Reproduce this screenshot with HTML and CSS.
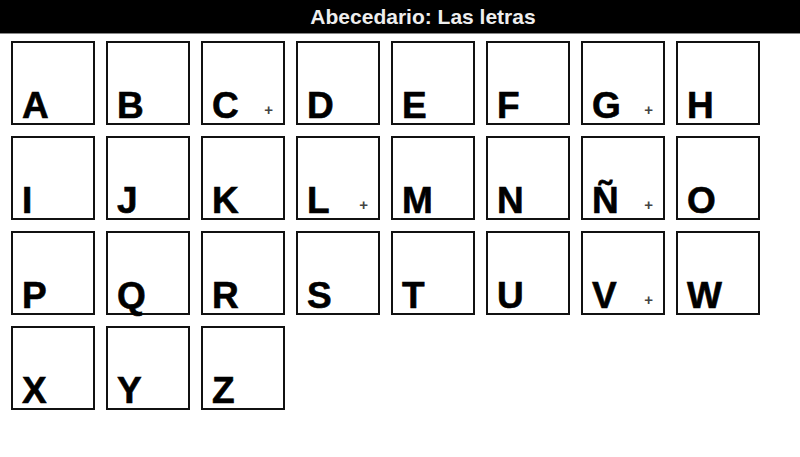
FILE: index.html
```html
<!DOCTYPE html>
<html lang="es">
<head>
    <meta charset="UTF-8">
    <meta name="viewport" content="width=device-width, initial-scale=1.0">
    <title>Abecedario: Las letras</title>
    <link rel="stylesheet" href="styles.css">
</head>
<body>

<div class="header">Abecedario: Las letras</div>

<div class="letters">
    <div class="tile"><span class="letter">A</span></div>
    <div class="tile"><span class="letter">B</span></div>
    <div class="tile"><span class="letter">C</span><span class="more">+</span></div>
    <div class="tile"><span class="letter">D</span></div>
    <div class="tile"><span class="letter">E</span></div>
    <div class="tile"><span class="letter">F</span></div>
    <div class="tile"><span class="letter">G</span><span class="more">+</span></div>
    <div class="tile"><span class="letter">H</span></div>
    <div class="tile"><span class="letter">I</span></div>
    <div class="tile"><span class="letter">J</span></div>
    <div class="tile"><span class="letter">K</span></div>
    <div class="tile"><span class="letter">L</span><span class="more">+</span></div>
    <div class="tile"><span class="letter">M</span></div>
    <div class="tile"><span class="letter">N</span></div>
    <div class="tile"><span class="letter">Ñ</span><span class="more">+</span></div>
    <div class="tile"><span class="letter">O</span></div>
    <div class="tile"><span class="letter">P</span></div>
    <div class="tile"><span class="letter">Q</span></div>
    <div class="tile"><span class="letter">R</span></div>
    <div class="tile"><span class="letter">S</span></div>
    <div class="tile"><span class="letter">T</span></div>
    <div class="tile"><span class="letter">U</span></div>
    <div class="tile"><span class="letter">V</span><span class="more">+</span></div>
    <div class="tile"><span class="letter">W</span></div>
    <div class="tile"><span class="letter">X</span></div>
    <div class="tile"><span class="letter">Y</span></div>
    <div class="tile"><span class="letter">Z</span></div>
</div>

</body>
</html>
```

FILE: styles.css
```css
body {
    margin: 0;
    font-family: "Liberation Sans", Arial, sans-serif;
    background: #fff;
}
.header {
    height: 33px;
    line-height: 33px;
    background: #000;
    color: #eee;
    font-size: 21px;
    font-weight: bold;
    text-align: center;
    padding-left: 46px;
    border-bottom: 1px solid #888;
}
.letters {
    display: grid;
    grid-template-columns: repeat(8, 84px);
    gap: 11px;
    padding: 7px 11px;
}
.tile {
    position: relative;
    box-sizing: border-box;
    width: 84px;
    height: 84px;
    border: 2px solid #111;
    display: flex;
    align-items: flex-end;
    padding-left: 9px;
}
.letter {
    font-size: 37px;
    font-weight: bold;
    line-height: 35px;
    color: #000;
    -webkit-text-stroke: 0.6px #000;
}
.more {
    position: absolute;
    right: 10px;
    bottom: 6px;
    font-size: 15px;
    font-weight: bold;
    line-height: 1;
    color: #444;
}
```
